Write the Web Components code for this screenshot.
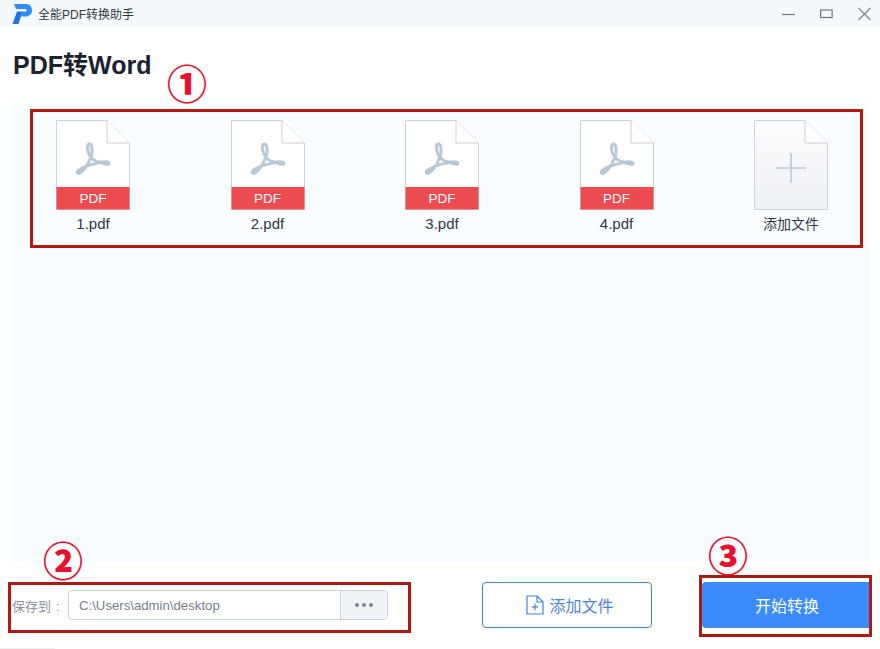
<!DOCTYPE html>
<html lang="zh">
<head>
<meta charset="utf-8">
<title>全能PDF转换助手</title>
<style>
    html, body { margin: 0; padding: 0; background: #fff; }
    body { width: 880px; height: 649px; overflow: hidden; font-family: "Liberation Sans", "Noto Sans CJK SC", sans-serif; }
</style>
</head>
<body>
<converter-app></converter-app>

<script>
class TitleBar extends HTMLElement {
    constructor() {
        super();
        this.attachShadow({ mode: 'open' });
        this.shadowRoot.innerHTML = `
            <style>
                :host {
                    display: flex;
                    align-items: center;
                    height: 27px;
                    background: #f6f9fc;
                    color: #33383f;
                    font: 12px "Liberation Sans", "Noto Sans CJK SC", sans-serif;
                }
                #logo { margin-left: 12px; width: 20px; height: 21px; margin-bottom: 1px; }
                #name { margin-left: 6px; flex: 1; }
                #controls { display: flex; gap: 25px; padding-right: 9px; align-items: center; }
                #controls svg { display: block; }
            </style>
            <svg id="logo" viewBox="0 0 20 21">
                <path d="M2 1 H14 C18 1 20 4 20 7.500 C20 11 17 13.500 14 13.500 H9 L10.500 8.500 H13 C14 8.500 14.500 8 14.500 7.200 C14.500 6.400 14 6 13 6 H4 Z" fill="#2f8cf5"/>
                <path d="M5 8.500 H10.500 L6.500 21 H0.500 Z" fill="#1f74ea"/>
            </svg>
            <span id="name"><slot></slot></span>
            <div id="controls">
                <svg width="13" height="14" viewBox="0 0 13 14"><path d="M0 7.500 H13" stroke="#6f7885" stroke-width="1.200"/></svg>
                <svg width="13" height="14" viewBox="0 0 13 14"><rect x="0.600" y="3" width="11.500" height="7.500" fill="none" stroke="#6f7885" stroke-width="1.200"/></svg>
                <svg width="13" height="14" viewBox="0 0 13 14"><path d="M0.500 1 L12.500 13 M12.500 1 L0.500 13" stroke="#7c8490" stroke-width="1.100"/></svg>
            </div>
        `;
    }
}

class FileItem extends HTMLElement {
    constructor() {
        super();
        this.attachShadow({ mode: 'open' });
        const isAdd = this.hasAttribute('add');
        const sheet = isAdd
            ? `<defs><linearGradient id="g" x1="0" y1="0" x2="0" y2="1"><stop offset="0" stop-color="#fbfcfd"/><stop offset="1" stop-color="#eef1f5"/></linearGradient></defs>
               <path d="M.5 .5 H51 L73.500 23 V89.500 H.5 Z" fill="url(#g)" stroke="#c9d2dc"/>
               <path d="M51 .5 V23 H73.500" fill="#fff" stroke="#c9d2dc"/>
               <path d="M37 33 V63 M22 48 H52" stroke="#c3d2e2" stroke-width="2" fill="none"/>`
            : `<path d="M.5 .5 H51 L73.500 23 V89.500 H.5 Z" fill="#fff" stroke="#c9d2dc"/>
               <path d="M51 .5 V23 H73.500" fill="#fff" stroke="#c9d2dc"/>
               <path d="M21.500 53 C24 55 28 49 31 45.500 C33 41 35.500 37 36 33 C36.500 28 35.500 24 33.500 24 C31 24 31 29 32.500 33 C34 37.500 38 41 44 42.500 C48 43.500 53 45.500 53 43.500 C53 41 46 41.500 41 43 C36 44.500 31 45.500 28 47 C25 48.500 20 51 21.500 53 Z" fill="none" stroke="#b9c8d8" stroke-width="3" stroke-linejoin="round"/>
               <rect x="0.500" y="67" width="73" height="22.500" fill="#ec4c4f"/>`;
        this.shadowRoot.innerHTML = `
            <style>
                :host {
                    display: flex;
                    flex-direction: column;
                    align-items: center;
                    width: 74px;
                    position: relative;
                }
                svg { display: block; }
                #pdf {
                    position: absolute;
                    top: 70px;
                    left: 0;
                    right: 0;
                    text-align: center;
                    color: #fff;
                    font-size: 13.500px;
                    line-height: 17px;
                }
                #label {
                    margin-top: 5px;
                    font-size: ${isAdd ? 14 : 15}px;
                    line-height: 18px;
                    color: #33383f;
                    white-space: nowrap;
                }
            </style>
            <svg width="74" height="90" viewBox="0 0 74 90">${sheet}</svg>
            ${isAdd ? '' : '<div id="pdf">PDF</div>'}
            <div id="label"><slot></slot></div>
        `;
    }
}

class PathPicker extends HTMLElement {
    constructor() {
        super();
        this.attachShadow({ mode: 'open' });
        this.shadowRoot.innerHTML = `
            <style>
                :host { display: flex; align-items: center; font-size: 13px; color: #8a919b; }
                #label { width: 56px; white-space: nowrap; overflow: visible; padding-top: 1px; }
                #colon { margin-left: 5px; }
                #box {
                    display: flex;
                    width: 318px;
                    height: 28px;
                    border: 1px solid #c8d0d8;
                    border-radius: 4px;
                    background: #fff;
                    overflow: hidden;
                }
                #path { flex: 1; padding: 1px 0 0 10px; line-height: 28px; color: #767d87; font-size: 13.200px; }
                #more {
                    display: flex;
                    align-items: center;
                    justify-content: center;
                    gap: 3px;
                    width: 46px;
                    border-left: 1px solid #c8d0d8;
                    background: #f0f3f8;
                }
                #more i { width: 4px; height: 4px; border-radius: 50%; background: #7e8694; }
            </style>
            <span id="label">保存到<span id="colon">:</span></span>
            <div id="box">
                <div id="path"><slot></slot></div>
                <div id="more"><i></i><i></i><i></i></div>
            </div>
        `;
    }
}

class ActionButton extends HTMLElement {
    constructor() {
        super();
        this.attachShadow({ mode: 'open' });
        this.shadowRoot.innerHTML = `
            <style>
                :host {
                    display: flex;
                    align-items: center;
                    justify-content: center;
                    gap: 5px;
                    box-sizing: border-box;
                    height: 46px;
                    border-radius: 4px;
                    font-size: 16px;
                    cursor: pointer;
                }
                :host([variant="outline"]) {
                    width: 170px;
                    padding-left: 6px;
                    border: 1px solid #3b84dc;
                    color: #4f84d8;
                    background: #fff;
                }
                :host([variant="solid"]) {
                    width: 170px;
                    background: #3a8bfb;
                    color: #fff;
                }
                svg { display: block; }
            </style>
            <slot name="icon"></slot>
            <slot></slot>
        `;
    }
}

class ConverterApp extends HTMLElement {
    constructor() {
        super();
        this.attachShadow({ mode: 'open' });
        this.shadowRoot.innerHTML = `
            <style>
                :host {
                    display: flex;
                    flex-direction: column;
                    position: relative;
                    width: 880px;
                    height: 649px;
                    overflow: hidden;
                    background: #fff;
                    font-family: "Liberation Sans", "Noto Sans CJK SC", sans-serif;
                }
                h1 {
                    margin: 0;
                    padding: 23px 0 0 13px;
                    height: 71px;
                    flex: none;
                    box-sizing: border-box;
                    font-size: 25px;
                    line-height: 30px;
                    font-weight: 700;
                    color: #1c2230;
                }
                #panel {
                    margin: 0 10px 0 11px;
                    height: 464px;
                    flex: none;
                    box-sizing: border-box;
                    padding: 22px 42px 0 45px;
                    background: #f9fdff;
                }
                #files { display: flex; justify-content: space-between; }
                #bottom {
                    display: flex;
                    align-items: center;
                    padding: 20px 0 0 12px;
                }
                #add { margin-left: 94px; }
                #start { margin-left: 50px; }
                .mark {
                    position: absolute;
                    box-sizing: border-box;
                    border: 3px solid #ad1a12;
                    pointer-events: none;
                }
                .num {
                    position: absolute;
                    width: 40px;
                    text-align: center;
                    color: #e8112d;
                    font: 900 40px/40px "Noto Sans CJK SC", sans-serif;
                }
                #edge {
                    position: absolute;
                    left: 0;
                    bottom: 0;
                    width: 55px;
                    height: 1px;
                    background: #eef0f2;
                }
            </style>
            <title-bar>全能PDF转换助手</title-bar>
            <h1>PDF转Word</h1>
            <div id="panel">
                <div id="files">
                    <file-item>1.pdf</file-item>
                    <file-item>2.pdf</file-item>
                    <file-item>3.pdf</file-item>
                    <file-item>4.pdf</file-item>
                    <file-item add>添加文件</file-item>
                </div>
            </div>
            <div id="bottom">
                <path-picker>C:\\Users\\admin\\desktop</path-picker>
                <action-button id="add" variant="outline">
                    <svg slot="icon" width="18" height="20" viewBox="0 0 18 20">
                        <path d="M1 1 H11 L17 7 V19 H1 Z M11 1 V7 H17 M9 8.500 V15 M5.800 11.800 H12.200" fill="none" stroke="#3b84dc" stroke-width="1.200"/>
                    </svg>
                    添加文件
                </action-button>
                <action-button id="start" variant="solid">开始转换</action-button>
            </div>
            <div class="mark" style="left:30px;top:109px;width:833px;height:139px"></div>
            <div class="mark" style="left:8px;top:582px;width:403px;height:51px"></div>
            <div class="mark" style="left:699px;top:575px;width:173px;height:62px"></div>
            <div class="num" style="left:167px;top:62px">①</div>
            <div class="num" style="left:43px;top:539px">②</div>
            <div class="num" style="left:708px;top:534px">③</div>
            <div id="edge"></div>
        `;
    }
}

customElements.define('title-bar', TitleBar);
customElements.define('file-item', FileItem);
customElements.define('path-picker', PathPicker);
customElements.define('action-button', ActionButton);
customElements.define('converter-app', ConverterApp);
</script>
</body>
</html>
